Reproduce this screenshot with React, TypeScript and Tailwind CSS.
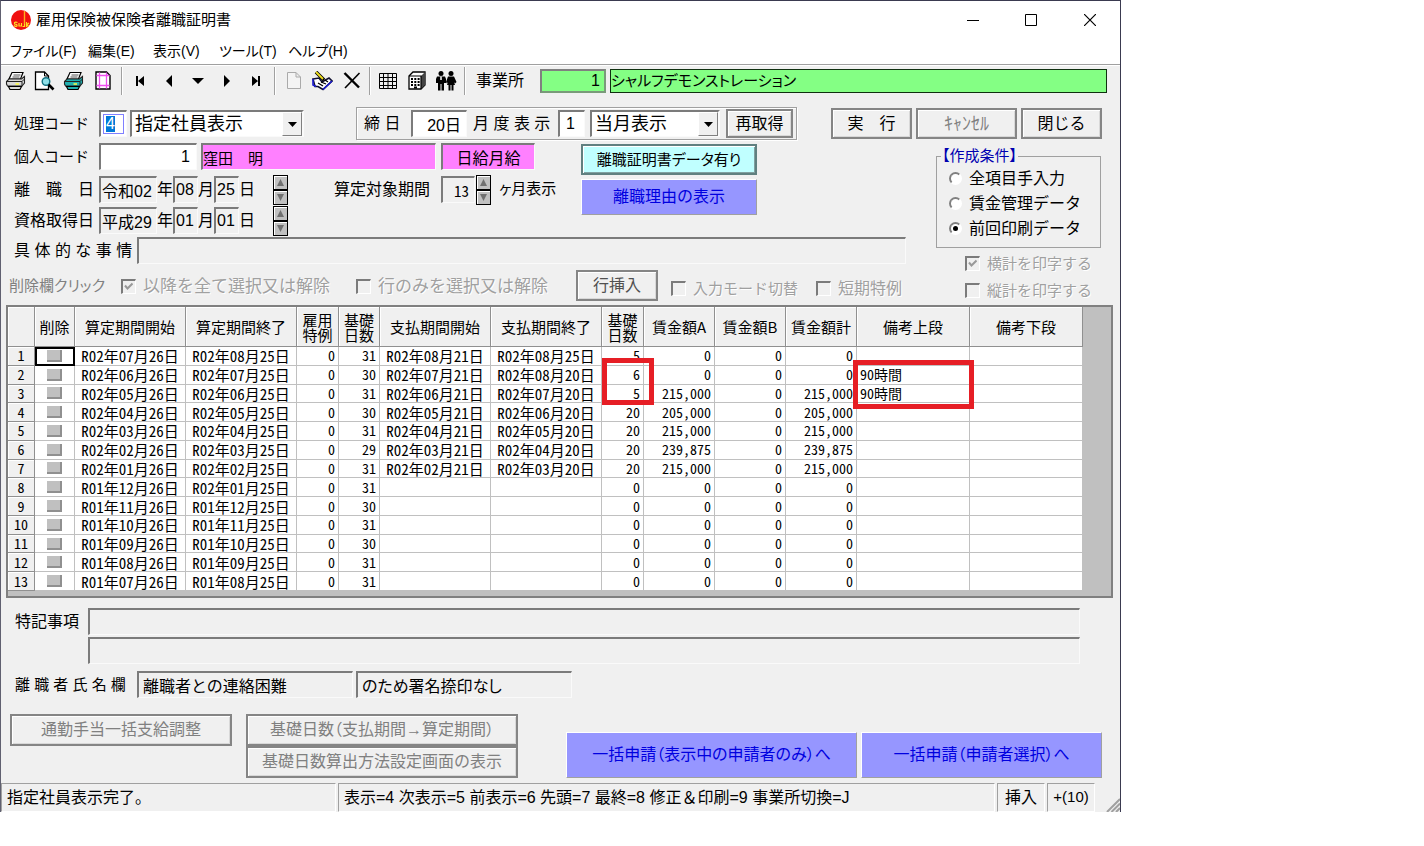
import type { ReactNode } from "react";
import clsx from "clsx";

const MENUS = [
  { label: "ファイル(F)", width: "w-[78px]" },
  { label: "編集(E)", width: "w-[65px]" },
  { label: "表示(V)", width: "w-[66px]" },
  { label: "ツール(T)", width: "w-[69px]" },
  { label: "ヘルプ(H)", width: "w-[70px]" },
];

const HEADERS = [
  "",
  "削除",
  "算定期間開始",
  "算定期間終了",
  "雇用\n特例",
  "基礎\n日数",
  "支払期間開始",
  "支払期間終了",
  "基礎\n日数",
  "賃金額A",
  "賃金額B",
  "賃金額計",
  "備考上段",
  "備考下段",
];

const COLS = [
  "w-[27px]",
  "w-[40px]",
  "w-[111px]",
  "w-[111px]",
  "w-[42px]",
  "w-[41px]",
  "w-[111px]",
  "w-[111px]",
  "w-[42px]",
  "w-[71px]",
  "w-[71px]",
  "w-[71px]",
  "w-[113px]",
  "w-[113px]",
];

// start, end, days, pay start, pay end, pay days, amount, note
const ROWS = [
  ["R02年07月26日", "R02年08月25日", "31", "R02年08月21日", "R02年08月25日", "5", "0", ""],
  ["R02年06月26日", "R02年07月25日", "30", "R02年07月21日", "R02年08月20日", "6", "0", "90時間"],
  ["R02年05月26日", "R02年06月25日", "31", "R02年06月21日", "R02年07月20日", "5", "215,000", "90時間"],
  ["R02年04月26日", "R02年05月25日", "30", "R02年05月21日", "R02年06月20日", "20", "205,000", ""],
  ["R02年03月26日", "R02年04月25日", "31", "R02年04月21日", "R02年05月20日", "20", "215,000", ""],
  ["R02年02月26日", "R02年03月25日", "29", "R02年03月21日", "R02年04月20日", "20", "239,875", ""],
  ["R02年01月26日", "R02年02月25日", "31", "R02年02月21日", "R02年03月20日", "20", "215,000", ""],
  ["R01年12月26日", "R02年01月25日", "31", "", "", "0", "0", ""],
  ["R01年11月26日", "R01年12月25日", "30", "", "", "0", "0", ""],
  ["R01年10月26日", "R01年11月25日", "31", "", "", "0", "0", ""],
  ["R01年09月26日", "R01年10月25日", "30", "", "", "0", "0", ""],
  ["R01年08月26日", "R01年09月25日", "31", "", "", "0", "0", ""],
  ["R01年07月26日", "R01年08月25日", "31", "", "", "0", "0", ""],
];

const SUNKEN =
  "border-t-2 border-l-2 border-r border-b border-t-[#7b7b7b] border-l-[#7b7b7b] border-r-[#fafafa] border-b-[#fafafa]";
const RAISED =
  "border-2 border-[#858585] bg-[#f0f0f0] shadow-[inset_1px_1px_0_#fff,inset_-1px_-1px_0_#d8d8d8]";
const BLUE =
  "border border-t-white border-l-white border-r-[#a0a0a0] border-b-[#a0a0a0] bg-[#9696ff] text-[#0000e0]";
const HALF = "font-['Noto_Sans_CJK_JP',sans-serif] [font-feature-settings:'hwid']";

function Field({
  label,
  value = "",
  className,
}: {
  label: string;
  value?: string;
  className?: string;
}) {
  return (
    <input
      type="text"
      aria-label={label}
      defaultValue={value}
      className={clsx("h-[27px] min-w-0 rounded-none px-1 outline-none", SUNKEN, className)}
    />
  );
}

function Btn({ children, className }: { children: ReactNode; className?: string }) {
  return (
    <button type="button" className={clsx("shrink-0 whitespace-nowrap text-center", className)}>
      {children}
    </button>
  );
}

function Combo({ label, value, className }: { label: string; value: string; className?: string }) {
  return (
    <div className={clsx("flex h-[27px] shrink-0 bg-white", SUNKEN, "border-r-2 border-r-[#a0a0a0]", className)}>
      <select aria-label={label} className="min-w-0 flex-1 appearance-none bg-white pl-[3px] text-[18px] outline-none">
        <option>{value}</option>
      </select>
      <span className="pointer-events-none flex w-5 items-center justify-center border border-t-white border-l-white border-r-[#808080] border-b-[#808080] bg-[#f0f0f0]">
        <svg width="9" height="5" viewBox="0 0 9 5">
          <path d="M0 0H9L4.5 5Z" fill="#000" />
        </svg>
      </span>
    </div>
  );
}

function Spinner({ label }: { label: string }) {
  return (
    <div className="flex h-[30px] w-[15px] shrink-0 flex-col">
      <button type="button" aria-label={`${label} 増`} className="flex flex-1 items-center justify-center border border-black bg-[#c0c0c0] shadow-[inset_1px_1px_0_#fff]">
        <svg width="7" height="7" viewBox="0 0 7 7">
          <path d="M3.5 0L7 7H0Z" fill="#707070" />
        </svg>
      </button>
      <button type="button" aria-label={`${label} 減`} className="flex flex-1 items-center justify-center border border-black bg-[#c0c0c0] shadow-[inset_1px_1px_0_#fff]">
        <svg width="7" height="7" viewBox="0 0 7 7">
          <path d="M3.5 7L7 0H0Z" fill="#707070" />
        </svg>
      </button>
    </div>
  );
}

function Check({
  label,
  checked,
  className,
}: {
  label: string;
  checked?: boolean;
  className?: string;
}) {
  return (
    <label className={clsx("flex shrink-0 items-center gap-[7px] whitespace-nowrap text-[#a0a0a0] [text-shadow:1px_1px_0_#fff]", className)}>
      <span className="grid">
        <input
          type="checkbox"
          disabled
          defaultChecked={checked}
          className="col-start-1 row-start-1 size-[15px] appearance-none border-t-2 border-l-2 border-r border-b border-t-[#7b7b7b] border-l-[#7b7b7b] border-r-white border-b-white bg-[#f0f0f0]"
        />
        {checked && (
          <svg className="col-start-1 row-start-1 m-auto" width="9" height="9" viewBox="0 0 9 9">
            <path d="M1 3.5L3.5 6.5L8.5 1.5" fill="none" stroke="#999" strokeWidth="2" />
          </svg>
        )}
      </span>
      {label}
    </label>
  );
}

function Radio({ label, checked }: { label: string; checked?: boolean }) {
  return (
    <label className="flex h-[25px] items-center gap-[7px] whitespace-nowrap text-base">
      <span className="grid">
        <input
          type="radio"
          name="condition"
          defaultChecked={checked}
          className="col-start-1 row-start-1 size-[13px] appearance-none rounded-full border-2 border-t-[#808080] border-l-[#808080] border-r-white border-b-white bg-white"
        />
        {checked && <span className="pointer-events-none col-start-1 row-start-1 m-auto size-[5px] rounded-full bg-black" />}
      </span>
      {label}
    </label>
  );
}

function Tool({ label, children }: { label: string; children: ReactNode }) {
  return (
    <button type="button" aria-label={label} className="flex h-6 w-[29px] shrink-0 items-center justify-center">
      {children}
    </button>
  );
}

function Sep() {
  return <span className="h-7 w-[2px] shrink-0 border-l border-[#a0a0a0] bg-white" />;
}

function Printer({ body }: { body: string }) {
  return (
    <svg width="22" height="20" viewBox="0 0 22 20">
      <path d="M7 1.5H18L15.500 8H4Z" fill="#fff" stroke="#000" strokeWidth="1.2" />
      <path d="M8.500 4H15.500M7.500 6H14.500" stroke="#555" />
      <path d="M4 8H16.500L19.500 5.500V12L17 15H2.500L1.500 13V10.500Z" fill={body} stroke="#222" strokeWidth="1.1" />
      <path d="M2 10.500H17L19.500 8M17 10.500V15" fill="none" stroke="#222" />
      <path d="M3.500 15.500H16.500L15 18.500H5Z" fill={body} stroke="#000" strokeWidth="1.2" />
      <path d="M10.500 13H14" stroke="#ffff40" strokeWidth="1.5" />
    </svg>
  );
}

function Arrow({ d }: { d: string }) {
  return (
    <svg width="12" height="12" viewBox="0 0 12 12">
      <path d={d} fill="#000" />
    </svg>
  );
}

function Toolbar() {
  return (
    <div className="flex h-[43px] items-start border-t border-[#a0a0a0] pt-[2px] pr-[13px] shadow-[inset_0_1px_0_#fff]">
      <div className="flex h-[27px] flex-1 items-center">
        <Tool label="印刷"><Printer body="#d8d8d8" /></Tool>
        <Tool label="プレビュー">
          <svg width="21" height="20" viewBox="0 0 21 20">
            <path d="M1.500 1H10.500L14.500 5V18.500H1.500Z" fill="#fff" stroke="#000" strokeWidth="1.3" />
            <path d="M10.500 1V5H14.500" fill="none" stroke="#000" />
            <circle cx="12" cy="10.500" r="3.800" fill="#8fe0e8" stroke="#107080" strokeWidth="1.400" />
            <path d="M14.500 13.500L19.500 18.500" stroke="#000" strokeWidth="2.600" />
          </svg>
        </Tool>
        <Tool label="一括印刷"><Printer body="#20b0b0" /></Tool>
        <Tool label="用紙設定">
          <svg width="16" height="19" viewBox="0 0 16 19">
            <path d="M1 1H11.500L15 4.500V18H1Z" fill="#fff" stroke="#000" strokeWidth="1.400" />
            <path d="M4.500 1.500V17.500M11.500 1.500V17.500M1.500 4.500H14.500M1.500 14.500H14.500" stroke="#f050f0" strokeWidth="1.300" />
          </svg>
        </Tool>
        <span className="w-1" />
        <Sep />
        <span className="w-[2px]" />
        <Tool label="先頭"><Arrow d="M2 1H4V11H2ZM10 1V11L4 6Z" /></Tool>
        <Tool label="前"><Arrow d="M9 0V12L3 6Z" /></Tool>
        <Tool label="選択"><Arrow d="M0 3H12L6 9Z" /></Tool>
        <Tool label="次"><Arrow d="M3 0V12L9 6Z" /></Tool>
        <Tool label="最終"><Arrow d="M8 1H10V11H8ZM2 1V11L8 6Z" /></Tool>
        <span className="w-1" />
        <Sep />
        <span className="w-[3px]" />
        <Tool label="新規">
          <svg width="14" height="17" viewBox="0 0 14 17">
            <path d="M.5.5H9L13.500 5V16.500H.5ZM9 .5V5H13.500" fill="#f4f4f4" stroke="#aaa" />
          </svg>
        </Tool>
        <Tool label="修正">
          <svg width="21" height="20" viewBox="0 0 21 20">
            <path d="M1 8L7 7L10 11L17 7L20 10L11 18.500L6 15.500H3Z" fill="#fff" stroke="#101030" strokeWidth="1.600" />
            <path d="M1 8V14L4 15.500M11 18.500L20 10" fill="none" stroke="#1818d0" strokeWidth="1.600" />
            <path d="M6 12L11 15M9 11L14 13M13 9L16 11" stroke="#000" strokeWidth="1.300" />
            <path d="M4 1L12 9" stroke="#000" strokeWidth="3.500" />
            <path d="M4 1L11 8" stroke="#f0e020" strokeWidth="1.800" />
          </svg>
        </Tool>
        <Tool label="削除">
          <svg width="18" height="17" viewBox="0 0 18 17">
            <path d="M1.500 1L16 15.500" stroke="#000" strokeWidth="2.400" />
            <path d="M16.500 1L2 16" stroke="#000" strokeWidth="1.600" />
          </svg>
        </Tool>
        <span className="w-[3px]" />
        <Sep />
        <span className="w-[2px]" />
        <Tool label="一覧">
          <svg width="18" height="16" viewBox="0 0 18 16">
            <path d="M.5.5H17.500V15.500H.5ZM.5 4.500H17.500M.5 8.500H17.500M.5 12.500H17.500M4.500 .5V15.500M9 .5V15.500M13.500 .5V15.500" fill="none" stroke="#000" />
          </svg>
        </Tool>
        <Tool label="事業所">
          <svg width="18" height="19" viewBox="0 0 18 19">
            <path d="M1 5L5 1H17V14L13 18H1Z" fill="#fff" stroke="#000" strokeWidth="1.300" />
            <path d="M13 5L17 1V14L13 18Z" fill="#444" />
            <path d="M1 5H13V18" fill="none" stroke="#000" strokeWidth="1.200" />
            <path d="M3 8H12M3 11H12M3 14H12" stroke="#000" strokeWidth="2" strokeDasharray="2 1.300" />
            <path d="M6 16.500H9" stroke="#000" strokeWidth="2" />
          </svg>
        </Tool>
        <Tool label="社員">
          <svg width="22" height="20" viewBox="0 0 22 20">
            <circle cx="6" cy="2.500" r="2.500" />
            <circle cx="16" cy="2.500" r="2.500" />
            <path d="M2 5.500H10L11 8V12H9V19.500H6.500V13H5.500V19.500H3V12H1V8Z" />
            <path d="M13 5.500H19L21.500 11L20 12.500L19 11L20 14H18.500V19.500H16.500V14H15.500V19.500H13.500V14H12L13 11L12 12.500L11 11Z" />
            <path d="M6 5.500V9" stroke="#fff" strokeWidth="1.500" />
          </svg>
        </Tool>
        <span className="w-1" />
        <Sep />
        <label htmlFor="office" className="w-[74px] shrink-0 pl-[10px] text-base">事業所</label>
        <input id="office" defaultValue="1" className="h-6 w-[66px] shrink-0 border-2 border-t-[#808080] border-l-[#808080] border-r-[#7a9a7a] border-b-[#7a9a7a] bg-[#84ff84] pr-1 text-right text-base outline-none" />
        <input aria-label="事業所名" defaultValue="シャルフデモンストレーション" className="ml-1 h-6 min-w-0 flex-1 border border-[#103010] bg-[#84ff84] text-[15px] outline-none [font-feature-settings:'palt']" />
      </div>
    </div>
  );
}

function DateRow({ label, year, month, day }: { label: string; year: string; month: string; day: string }) {
  return (
    <div className="flex h-[31px] items-center text-base">
      <span className="w-[85px] shrink-0 whitespace-pre">{label}</span>
      <Field label={`${label} 年`} value={year} className="w-[58px] !px-[1px]" />
      <span className="w-4">年</span>
      <Field label={`${label} 月`} value={month} className="w-[25px] !px-[1px]" />
      <span className="w-4">月</span>
      <Field label={`${label} 日`} value={day} className="w-[25px] !px-[1px]" />
      <span className="w-[34px]">日</span>
      <Spinner label={label} />
    </div>
  );
}

function HeaderForm() {
  return (
    <div className="flex h-[33px] items-center pr-[18px] pl-[13px]">
      <label htmlFor="code" className="w-[85px] shrink-0 text-[15px]">処理コード</label>
      <span className={clsx("flex h-[27px] w-[28px] shrink-0 bg-white p-[2px]", SUNKEN)}>
        <span className="flex flex-1 items-center border border-[#8080ff] pl-[2px]">
          <input id="code" defaultValue="4" className="h-4 w-[9px] bg-[#0078d7] text-base text-white outline-none" />
        </span>
      </span>
      <Combo label="処理" value="指定社員表示" className="ml-[3px] w-[174px]" />
      <div className="ml-[52px] flex h-[33px] w-[441px] shrink-0 items-center border border-[#a0a0a0] pl-[7px] shadow-[inset_1px_1px_0_#fff,1px_1px_0_#fff]">
        <label htmlFor="closing" className="w-[47px] shrink-0 text-base">締 日</label>
        <input id="closing" defaultValue="20日" className={clsx("h-[27px] w-[56px] bg-white pr-[5px] text-right text-base outline-none", SUNKEN)} />
        <label htmlFor="month" className="w-[91px] shrink-0 pl-[6px] text-base">月 度 表 示</label>
        <input id="month" defaultValue="1" className={clsx("h-[27px] w-[27px] bg-white pl-[6px] text-base outline-none", SUNKEN)} />
        <Combo label="表示月" value="当月表示" className="ml-[5px] w-[130px]" />
        <Btn className={clsx("ml-[6px] h-[29px] w-[67px] text-base", RAISED)}>再取得</Btn>
      </div>
      <span className="flex-1" />
      <div className="flex gap-1">
        <Btn className={clsx("h-[31px] w-[81px] text-base", RAISED)}>実　行</Btn>
        <Btn className={clsx("h-[31px] w-[101px] text-[18px] text-[#808080]", RAISED)}>ｷｬﾝｾﾙ</Btn>
        <Btn className={clsx("h-[31px] w-[81px] text-base", RAISED)}>閉じる</Btn>
      </div>
    </div>
  );
}

function PersonForm() {
  return (
    <div className="flex-1">
      <div className="flex pl-[13px]">
        <div className="w-[567px] shrink-0">
          <div className="mb-1 flex items-center">
            <label htmlFor="person" className="w-[85px] shrink-0 text-[15px]">個人コード</label>
            <input id="person" defaultValue="1" className={clsx("h-[27px] w-[98px] bg-white pr-[6px] text-right text-base outline-none", SUNKEN)} />
            <Field label="氏名" value="窪田　明" className="ml-1 w-[235px] bg-[#ff80ff] !px-0 text-[15px]" />
            <Field label="給与区分" value="日給月給" className="ml-[5px] w-[94px] bg-[#ff80ff] text-center text-base" />
          </div>
          <div className="flex">
            <div className="w-[320px] shrink-0">
              <DateRow label="離　職　日" year="令和02" month="08" day="25" />
              <DateRow label="資格取得日" year="平成29" month="01" day="01" />
            </div>
            <div className="flex h-[31px] items-center text-base">
              <label htmlFor="span" className="w-[107px] shrink-0">算定対象期間</label>
              <input id="span" defaultValue="13" className={clsx("h-[27px] w-[34px] pr-[5px] text-right text-[15px] outline-none", HALF, SUNKEN)} />
              <span className="w-px" />
              <Spinner label="算定対象期間" />
              <span className="pl-[8px] text-[15px] whitespace-nowrap [font-feature-settings:'palt']">ヶ月表示</span>
            </div>
          </div>
        </div>
        <div className="w-[176px] shrink-0 pt-px">
          <Btn className="block h-[31px] w-full border-2 border-[#608080] bg-[#c0ffff] text-[15px] shadow-[inset_1px_1px_0_#fff,inset_-1px_-1px_0_#80a0a0] [font-feature-settings:'palt']">
            離職証明書データ有り
          </Btn>
          <Btn className={clsx("mt-1 block h-9 w-full text-base", BLUE)}>離職理由の表示</Btn>
        </div>
      </div>
      <div className="flex items-center pt-px pr-[30px] pl-[13px]">
        <label htmlFor="detail" className="w-[123px] shrink-0 text-base whitespace-nowrap">具 体 的 な 事 情</label>
        <input id="detail" className={clsx("h-[27px] min-w-0 flex-1 outline-none", SUNKEN)} />
      </div>
      <div className="mt-[6px] flex h-[31px] items-center pl-[8px]">
        <span className="w-[112px] shrink-0 text-[15px] text-[#808080] [font-feature-settings:'palt']">削除欄クリック</span>
        <Check label="以降を全て選択又は解除" checked className="w-[235px] pt-[2px] text-[17px]" />
        <Check label="行のみを選択又は解除" className="w-[220px] pt-[2px] text-[17px]" />
        <Btn className={clsx("h-[31px] w-[82px] text-base text-[#505050]", RAISED)}>行挿入</Btn>
        <Check label="入力モード切替" className="ml-[13px] w-[145px] pt-[6px] text-[15px]" />
        <Check label="短期特例" className="pt-[6px] text-base" />
      </div>
    </div>
  );
}

function Conditions() {
  return (
    <div className="w-[184px] shrink-0 pr-[19px]">
      <fieldset className="mt-[6px] h-[99px] border border-[#a0a0a0] pl-3">
        <legend className="-ml-2 px-px text-[15px] leading-[14px] text-[#0000b0] [font-feature-settings:'palt']">【作成条件】</legend>
        <div className="mt-[3px]">
          <Radio label="全項目手入力" />
          <Radio label="賃金管理データ" />
          <Radio label="前回印刷データ" checked />
        </div>
      </fieldset>
      <Check label="横計を印字する" checked className="mt-[2px] ml-[29px] h-[27px] text-[15px]" />
      <Check label="縦計を印字する" className="ml-[29px] h-[27px] text-[15px]" />
    </div>
  );
}

function Grid() {
  const head = "border-r border-b border-[#909090] bg-[#f0f0f0] p-0 font-normal shadow-[inset_1px_1px_0_#fff]";
  const cell = "border-r border-b border-[#c0c0c0] p-0";
  const num = `${cell} pr-[3px] text-right text-[14px]`;
  return (
    <div className="relative mt-px mr-[7px] ml-[5px] h-[293px] border-2 border-[#808080] bg-[#c0c0c0]">
      <table className={clsx("h-[284px] w-[1075px] table-fixed border-separate border-spacing-0 bg-white text-[15px] leading-[17px] whitespace-nowrap", HALF)}>
        <colgroup>
          {COLS.map((w, i) => (
            <col key={i} className={w} />
          ))}
        </colgroup>
        <thead>
          <tr className="h-10">
            {HEADERS.map((h, i) => (
              <th key={i} scope="col" className={clsx(head, "whitespace-pre leading-[15px] [font-feature-settings:normal]")}>
                {h}
              </th>
            ))}
          </tr>
        </thead>
        <tbody>
          {ROWS.map(([start, end, days, payStart, payEnd, payDays, amount, note], i) => (
            <tr key={start}>
              <th scope="row" className={clsx(head, "text-[14px]")}>{i + 1}</th>
              <td className={clsx(cell, i === 0 && "outline-2 -outline-offset-2 outline-black")}>
                <button
                  type="button"
                  aria-label={`${i + 1}行目を削除`}
                  className="mx-auto block h-3 w-[15px] border-r-2 border-b-2 border-r-[#909090] border-b-[#909090] bg-[#c0c0c0]"
                />
              </td>
              <td className={`${cell} text-center`}>{start}</td>
              <td className={`${cell} text-center`}>{end}</td>
              <td className={num}>0</td>
              <td className={num}>{days}</td>
              <td className={`${cell} text-center`}>{payStart}</td>
              <td className={`${cell} text-center`}>{payEnd}</td>
              <td className={num}>{payDays}</td>
              <td className={num}>{amount}</td>
              <td className={num}>0</td>
              <td className={num}>{amount}</td>
              <td className={`${cell} pl-[3px] text-[14px]`}>{note}</td>
              <td className={cell} />
            </tr>
          ))}
        </tbody>
      </table>
      <span className="pointer-events-none absolute top-[51px] left-[594px] h-[47px] w-[52px] border-[5px] border-[#e61e25]" />
      <span className="pointer-events-none absolute top-[53px] left-[845px] h-[49px] w-[121px] border-[5px] border-[#e61e25]" />
    </div>
  );
}

function Footer() {
  return (
    <div className="pr-[18px] pl-[9px]">
      <div className="flex pt-[10px] pr-[22px] pl-[5px]">
        <label htmlFor="note1" className="w-[73px] shrink-0 pt-[2px] text-base">特記事項</label>
        <div className="flex flex-1 flex-col gap-[2px]">
          <input id="note1" className={clsx("h-[27px] w-full outline-none", SUNKEN)} />
          <input aria-label="特記事項 2" className={clsx("h-[27px] w-full outline-none", SUNKEN)} />
        </div>
      </div>
      <div className="mt-[7px] flex items-center pl-[5px]">
        <label htmlFor="leaver" className="w-[122px] shrink-0 text-[15px] whitespace-nowrap">離 職 者 氏 名 欄</label>
        <input id="leaver" defaultValue="離職者との連絡困難" className={clsx("h-[27px] w-[216px] pl-[4px] text-base outline-none", SUNKEN)} />
        <Field label="署名" value="のため署名捺印なし" className="ml-[3px] w-[216px] text-base [font-feature-settings:'palt']" />
      </div>
      <div className="mt-4 flex text-base text-[#808080]">
        <Btn className={clsx("h-8 w-[222px]", RAISED)}>通勤手当一括支給調整</Btn>
        <div className="ml-[14px] flex flex-col">
          <Btn className={clsx("h-8 w-[272px] [font-feature-settings:'palt']", RAISED)}>基礎日数（支払期間→算定期間）</Btn>
          <Btn className={clsx("h-8 w-[272px]", RAISED)}>基礎日数算出方法設定画面の表示</Btn>
        </div>
        <span className="flex-1" />
        <div className="flex items-end gap-1 [font-feature-settings:'palt']">
          <Btn className={clsx("h-[46px] w-[291px]", BLUE)}>一括申請（表示中の申請者のみ）へ</Btn>
          <Btn className={clsx("h-[46px] w-[241px]", BLUE)}>一括申請（申請者選択）へ</Btn>
        </div>
      </div>
    </div>
  );
}

function StatusBar() {
  const pane = "flex items-center border border-t-[#a0a0a0] border-l-[#a0a0a0] border-r-white border-b-white whitespace-nowrap";
  return (
    <div className="mt-[5px] flex h-[29px] gap-[2px] text-base">
      <div className={clsx(pane, "w-[335px] pl-[5px]")}>指定社員表示完了。</div>
      <div className={clsx(pane, "flex-1 pl-[5px]")}>
        表示=4 次表示=5 前表示=6 先頭=7 最終=8 修正＆印刷=9 事業所切換=J
      </div>
      <div className={clsx(pane, "w-[48px] justify-center")}>挿入</div>
      <div className={clsx(pane, "w-[48px] justify-center text-[15px]")}>+(10)</div>
      <svg className="mt-auto ml-[9px]" width="14" height="14" viewBox="0 0 14 14">
        <path d="M1 14L14 1M5.500 14L14 5.500M10 14L14 10" stroke="#a0a0a0" strokeWidth="2" />
      </svg>
    </div>
  );
}

export default function App() {
  return (
    <div className="bg-white pr-[303px] font-['Liberation_Sans','Noto_Sans_CJK_JP',sans-serif] leading-6 text-black">
      <main className="border-t border-r border-l border-[#3a3a50] border-l-[#606070] bg-[#f0f0f0]">
        <header className="flex h-[37px] items-center bg-white pl-[10px]">
          <svg width="20" height="20" viewBox="0 0 20 20">
            <circle cx="10" cy="10" r="10" fill="#f01010" />
            <path d="M13.500 1V14" stroke="#ffb020" strokeWidth="1.400" />
            <path d="M6.500 12.500Q3 11.500 3.500 14Q6.500 14 6 16Q4.500 17 3 15.500M8 13V16H10.500V13M13.500 14V16.500H11.500M15.500 12V17M18 13L15.500 15L18 16.500" fill="none" stroke="#ffe020" strokeWidth="1.200" />
          </svg>
          <h1 className="flex-1 pl-[5px] text-[15px]">雇用保険被保険者離職証明書</h1>
          <button type="button" aria-label="最小化" className="flex w-[58px] justify-center">
            <svg width="12" height="12" viewBox="0 0 12 12"><path d="M0 6.500H12" stroke="#000" /></svg>
          </button>
          <button type="button" aria-label="最大化" className="flex w-[58px] justify-center">
            <svg width="12" height="12" viewBox="0 0 12 12"><path d="M.5.5H11.500V11.500H.5Z" fill="none" stroke="#000" /></svg>
          </button>
          <button type="button" aria-label="閉じる" className="flex w-[60px] justify-center">
            <svg width="12" height="12" viewBox="0 0 12 12"><path d="M0 0L12 12M12 0L0 12" stroke="#000" strokeWidth="1.200" /></svg>
          </button>
        </header>
        <nav className="flex h-[26px] items-center bg-white pl-[9px] text-[14px] [font-feature-settings:'palt']">
          {MENUS.map((m) => (
            <button key={m.label} type="button" className={clsx("text-left whitespace-nowrap", m.width)}>
              {m.label}
            </button>
          ))}
        </nav>
        <Toolbar />
        <HeaderForm />
        <div className="flex pt-[3px]">
          <PersonForm />
          <Conditions />
        </div>
        <Grid />
        <Footer />
        <StatusBar />
      </main>
    </div>
  );
}
